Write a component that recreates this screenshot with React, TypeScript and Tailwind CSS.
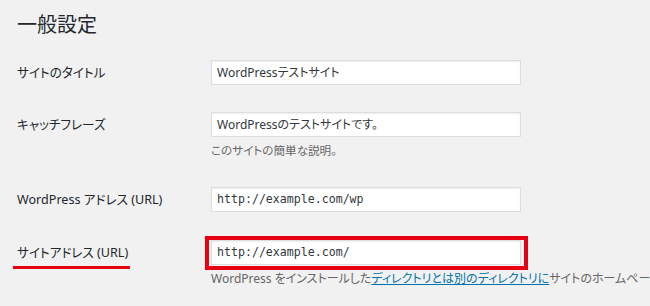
import React from "react";

const jp = "font-['Noto_Sans','Noto_Sans_CJK_JP',sans-serif] [font-feature-settings:'palt']";
const mono = "font-['DejaVu_Sans_Mono','Liberation_Mono',monospace]";

// ─── Field ────────────────────────────────────────────────────────────────────

function Field({ value, code }: { value: string; code?: boolean }) {
  return (
    <div
      className={`h-[25px] w-[310px] border border-[#dddddd] bg-white pl-[5px] leading-[23px] text-[#32373c] shadow-[inset_0_1px_2px_rgba(0,0,0,0.07)] ${
        code ? `${mono} text-[11.6px]` : `${jp} text-[12px]`
      }`}
    >
      {value}
    </div>
  );
}

function Row({
  label,
  children,
  className = "",
  mark,
}: {
  label: string;
  children: React.ReactNode;
  className?: string;
  mark?: boolean;
}) {
  return (
    <div className={`flex items-start ${className}`}>
      <div className="relative w-[194px] shrink-0">
        <span className="block h-[25px] text-[12.6px] leading-[25px] text-[#23282d]">{label}</span>
        {mark && <span className="absolute left-[-4px] top-[26px] h-[3px] w-[117px] bg-[#e60012]" />}
      </div>
      <div className="flex min-w-0 flex-col items-start">{children}</div>
    </div>
  );
}

export default function App() {
  return (
    <div className={`h-[306px] w-[650px] overflow-hidden bg-[#f1f1f1] pl-[17px] pt-[10px] ${jp}`}>
      <h1 className="text-[20px] leading-[29px] text-[#23282d]">一般設定</h1>

      <Row label="サイトのタイトル" className="mt-[21px]">
        <Field value="WordPressテストサイト" />
      </Row>

      <Row label="キャッチフレーズ" className="mt-[27px]">
        <Field value="WordPressのテストサイトです。" />
        <p className="mt-[5px] whitespace-nowrap text-[11.6px] leading-[18px] text-[#666666]">
          このサイトの簡単な説明。
        </p>
      </Row>

      <Row label="WordPress アドレス (URL)" className="mt-[27px]">
        <Field value="http://example.com/wp" code />
      </Row>

      <Row label="サイトアドレス (URL)" className="mt-[28px]" mark>
        <div className="relative">
          <Field value="http://example.com/" code />
          {/* 赤枠 */}
          <span className="pointer-events-none absolute -bottom-[5px] -left-[6px] -right-[7px] -top-[4px] border-[4px] border-[#e60012]" />
        </div>
        <p className="mt-[5px] whitespace-nowrap text-[12px] leading-[18px] text-[#666666]">
          WordPress をインストールした
          <a className="text-[#0073aa] underline">ディレクトリとは別のディレクトリに</a>
          サイトのホームページを表示させたい場合は、ここにアドレスを入力してください。
        </p>
      </Row>
    </div>
  );
}
